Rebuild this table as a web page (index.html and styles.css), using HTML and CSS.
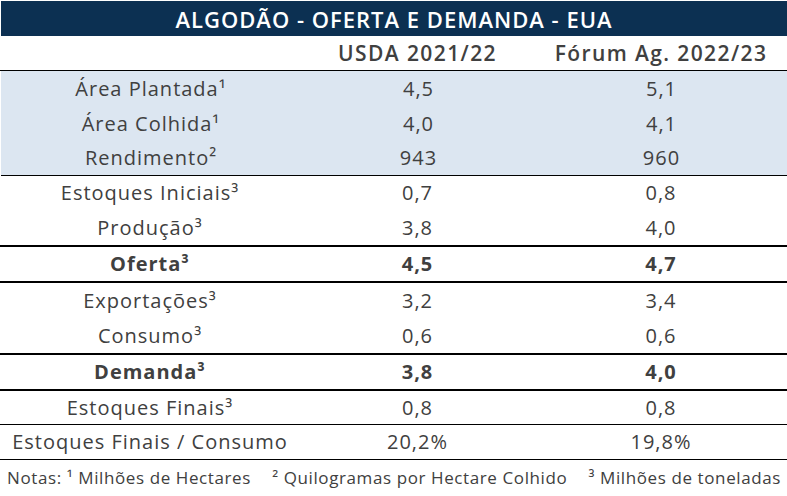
FILE: index.html
```html
<!DOCTYPE html>
<html lang="pt">
<head>
<meta charset="utf-8">
<title>Algodão - Oferta e Demanda - EUA</title>
<link rel="stylesheet" href="styles.css">
</head>
<body>
<div class="sheet">
  <div class="title">ALGODÃO - OFERTA E DEMANDA - EUA</div>
  <div class="row head line1">
    <div class="c"></div>
    <div class="c">USDA 2021/22</div>
    <div class="c">Fórum Ag. 2022/23</div>
  </div>
  <div class="row shade h35">
    <div class="c">Área Plantada¹</div>
    <div class="c">4,5</div>
    <div class="c">5,1</div>
  </div>
  <div class="row shade h35">
    <div class="c">Área Colhida¹</div>
    <div class="c">4,0</div>
    <div class="c">4,1</div>
  </div>
  <div class="row shade h35 line1">
    <div class="c">Rendimento²</div>
    <div class="c">943</div>
    <div class="c">960</div>
  </div>
  <div class="row h34">
    <div class="c">Estoques Iniciais³</div>
    <div class="c">0,7</div>
    <div class="c">0,8</div>
  </div>
  <div class="row h37 line2">
    <div class="c">Produção³</div>
    <div class="c">3,8</div>
    <div class="c">4,0</div>
  </div>
  <div class="row h36 line2 bold">
    <div class="c">Oferta³</div>
    <div class="c">4,5</div>
    <div class="c">4,7</div>
  </div>
  <div class="row h35">
    <div class="c">Exportações³</div>
    <div class="c">3,2</div>
    <div class="c">3,4</div>
  </div>
  <div class="row h37 line2">
    <div class="c">Consumo³</div>
    <div class="c">0,6</div>
    <div class="c">0,6</div>
  </div>
  <div class="row h36 line2 bold">
    <div class="c">Demanda³</div>
    <div class="c">3,8</div>
    <div class="c">4,0</div>
  </div>
  <div class="row h34 line1">
    <div class="c">Estoques Finais³</div>
    <div class="c">0,8</div>
    <div class="c">0,8</div>
  </div>
  <div class="row h35 line1">
    <div class="c">Estoques Finais / Consumo</div>
    <div class="c">20,2%</div>
    <div class="c">19,8%</div>
  </div>
  <div class="notes">
    <span>Notas: ¹ Milhões de Hectares</span>
    <span>² Quilogramas por Hectare Colhido</span>
    <span>³ Milhões de toneladas</span>
  </div>
</div>
</body>
</html>
```

FILE: styles.css
```css
* { box-sizing: border-box; }
html, body { margin: 0; padding: 0; background: #ffffff; }
body {
  width: 787px;
  height: 496px;
  overflow: hidden;
  font-family: "Open Sans", "Liberation Sans", sans-serif;
  color: #404040;
}
.sheet {
  padding-top: 1px;
  display: flex;
  flex-direction: column;
}
.title {
  margin-left: 1px;
  height: 35px;
  background: #0c3052;
  color: #ffffff;
  font-size: 22px;
  font-weight: 600;
  letter-spacing: 1px;
  display: flex;
  align-items: center;
  justify-content: center;
  padding-top: 1px;
}
.row {
  display: grid;
  grid-template-columns: 300px 235px 1fr;
  font-size: 20px;
  letter-spacing: 1px;
}
.row .c {
  display: flex;
  align-items: center;
  justify-content: center;
  padding-bottom: 1px;
}
.head { height: 35px; font-weight: 600; font-size: 21px; letter-spacing: 1.4px; }
.shade { background: #dce6f1; margin-left: 1px; }
.h34 { height: 34px; }
.h35 { height: 35px; }
.h36 { height: 36px; }
.h37 { height: 37px; }
.line1 { border-bottom: 1px solid #000000; }
.line2 { border-bottom: 2px solid #000000; }
.bold { font-weight: 700; }
.notes {
  height: 36px;
  display: flex;
  align-items: center;
  justify-content: space-between;
  padding: 0 6px 2px 7px;
  font-size: 17px;
  letter-spacing: 0.6px;
}
```
